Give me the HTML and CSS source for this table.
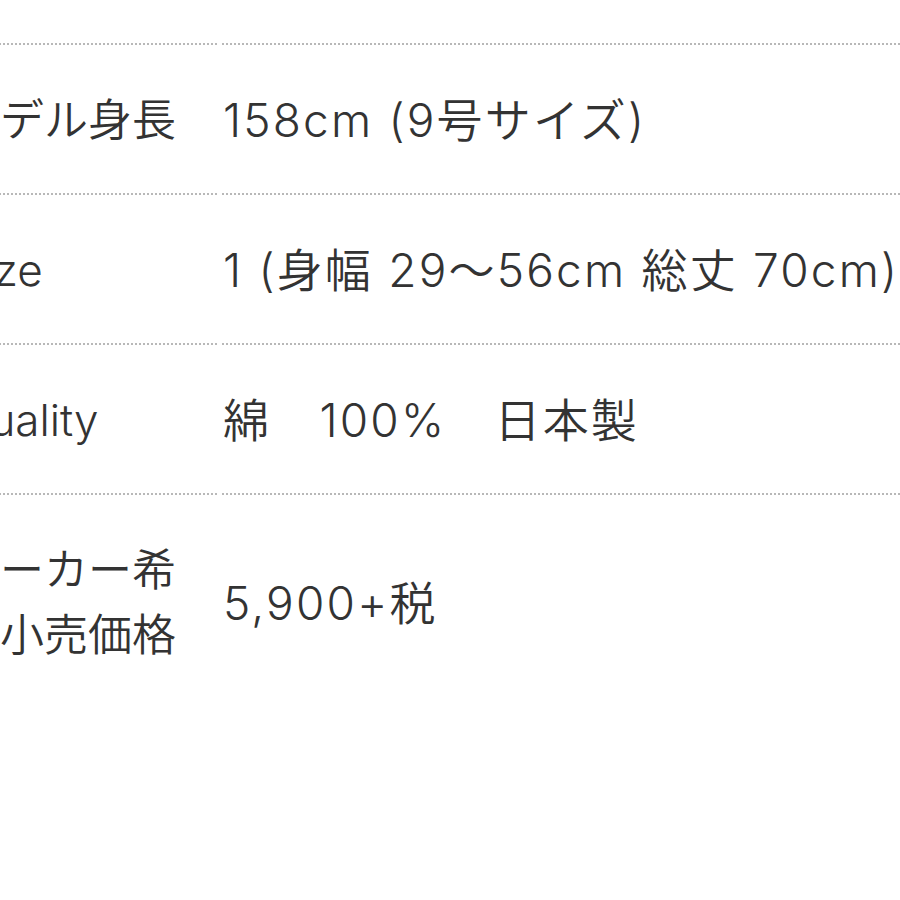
FILE: index.html
```html
<!DOCTYPE html>
<html lang="ja">
<head>
<meta charset="utf-8">
<title>Spec</title>
<link rel="stylesheet" href="styles.css">
</head>
<body>
<div class="page">
  <dl class="spec">
    <dt class="label">モデル身長</dt>
    <dd class="value">158cm (9号サイズ)</dd>
    <dt class="label">Size</dt>
    <dd class="value">1 (身幅 29〜56cm 総丈 70cm)</dd>
    <dt class="label">Quality</dt>
    <dd class="value">綿　100%　日本製</dd>
    <dt class="label">メーカー希望小売価格</dt>
    <dd class="value">5,900+税</dd>
  </dl>
</div>
</body>
</html>
```

FILE: styles.css
```css
html, body {
  margin: 0;
  padding: 0;
  background: #ffffff;
}

.page {
  width: 900px;
  height: 900px;
  overflow: hidden;
}

.spec {
  display: grid;
  grid-template-columns: 261px 1fr;
  column-gap: 5px;
  margin: 43px 0 0 -44px;
  width: 1000px;
  font-family: Inter, "Noto Sans CJK JP", sans-serif;
  font-weight: 350;
  line-height: 65px;
  color: #333333;
}

.label,
.value {
  margin: 0;
  border-top: 2px dotted #b8b8b8;
  padding: 43px 0 40px;
}

.label {
  font-size: 44px;
  padding-right: 36px;
  word-break: break-all;
}

.value {
  display: flex;
  align-items: center;
  padding-left: 1px;
  font-size: 46px;
  letter-spacing: 2.2px;
  white-space: nowrap;
}
```
